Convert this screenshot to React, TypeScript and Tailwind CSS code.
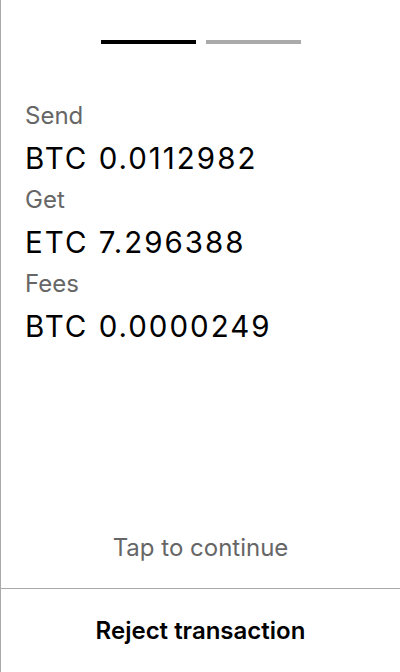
import React, { ReactElement } from 'react';

type Row = {
  label: string;
  value: string;
};

const rows: Row[] = [
  { label: 'Send', value: 'BTC 0.0112982' },
  { label: 'Get', value: 'ETC 7.296388' },
  { label: 'Fees', value: 'BTC 0.0000249' },
];

const App = (): ReactElement => {
  return (
    <div className="flex flex-col h-[672px] w-[400px] bg-white border-l border-[#aaaaaa] font-['Inter',sans-serif]">
      <div className="flex justify-center gap-[10px] pt-10 pl-[1px]">
        <div className="h-1 w-[95px] bg-black" />
        <div className="h-1 w-[95px] bg-[#aaaaaa]" />
      </div>
      <div className="flex flex-col px-6 pt-[54px]">
        {rows.map((row) => (
          <div key={row.label} className="flex flex-col">
            <span className="text-[24px] leading-[36px] text-[#666666]">
              {row.label}
            </span>
            <span className="text-[29.5px] leading-[48px] tracking-[2px] text-black">
              {row.value}
            </span>
          </div>
        ))}
      </div>
      <div className="flex-1" />
      <button className="h-[80px] text-[24px] text-[#666666]">
        Tap to continue
      </button>
      <div className="h-[1px] bg-[#aaaaaa]" />
      <button className="h-[83px] text-[24px] font-semibold text-black">
        Reject transaction
      </button>
    </div>
  );
};

export default App;
